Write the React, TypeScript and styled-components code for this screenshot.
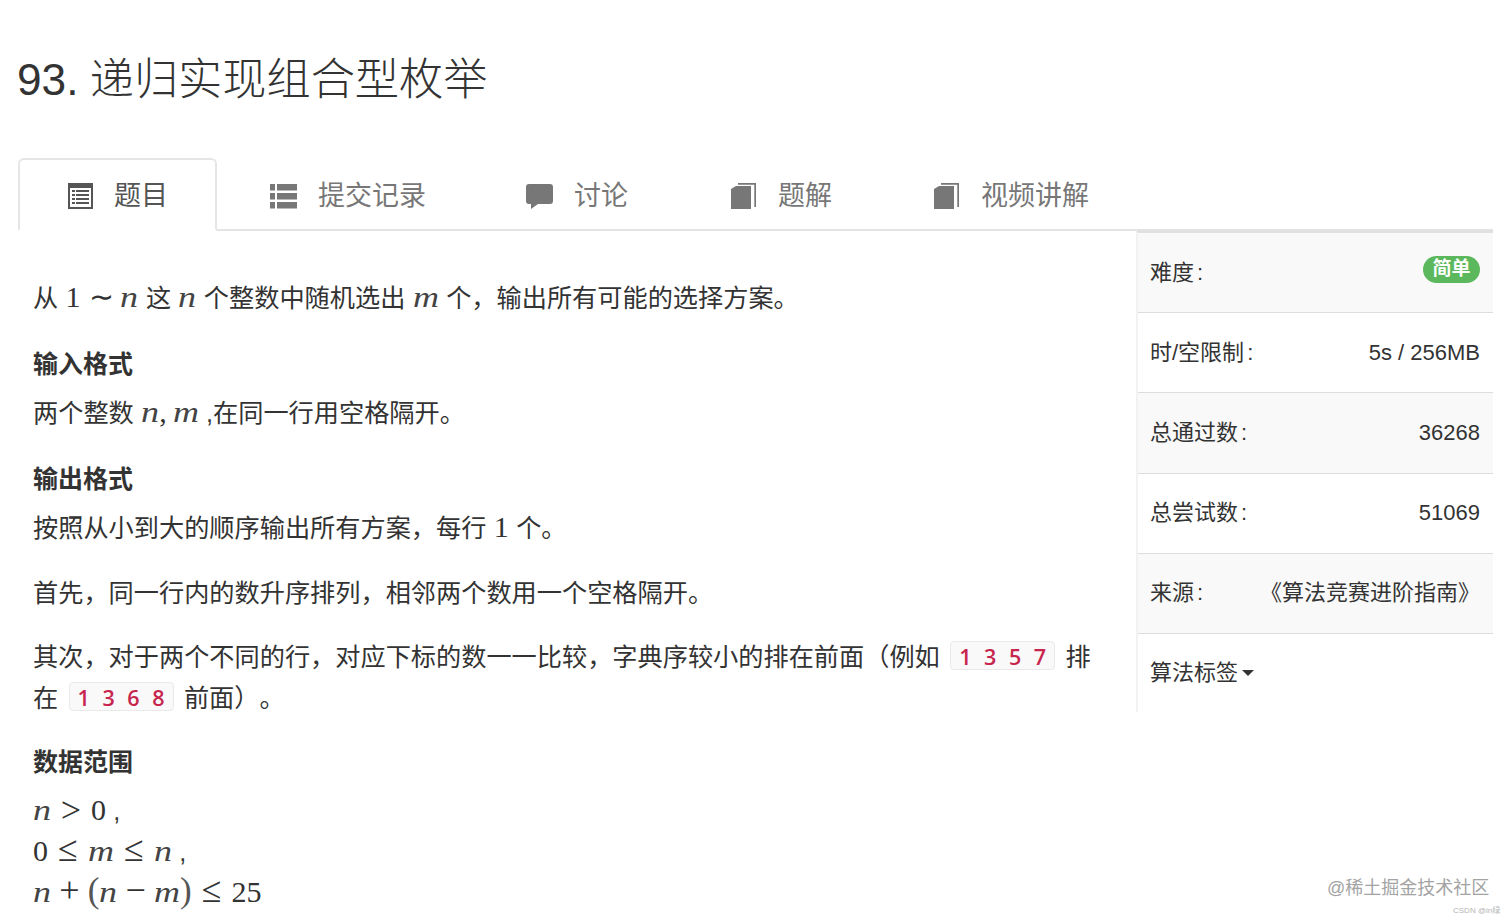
import React from "react";
import styled, { createGlobalStyle } from "styled-components";

const Global = createGlobalStyle`
  html, body { margin: 0; padding: 0; background: #fff; }
  body {
    height: 923px;
    overflow: hidden;
    color: #333;
    font-family: "Liberation Sans", "Noto Sans CJK SC", sans-serif;
    text-spacing-trim: space-all;
  }
`;

const Page = styled.div`
  position: relative;
  width: 1512px;
  height: 923px;
  padding: 52px 19px 0 17px;
  box-sizing: border-box;
  overflow: hidden;
`;

const Title = styled.h1`
  margin: 0 0 50px;
  font-size: 44.2px;
  line-height: 56px;
  font-weight: 300;
  word-spacing: -1px;
  color: #333;
`;

const Tabs = styled.ul`
  display: flex;
  margin: 0 0 0 1px;
  padding: 0;
  list-style: none;
  height: 73px;
  box-sizing: border-box;
  border-bottom: 2px solid #e4e4e4;
`;

const Tab = styled.li<{ $ml?: number }>`
  display: flex;
  align-items: center;
  gap: 21px;
  height: 73px;
  box-sizing: border-box;
  padding: 0 49px 3px 50px;
  margin-left: ${(p) => p.$ml ?? 0}px;
  font-size: 27px;
  color: #777;
`;

const ActiveTab = styled(Tab)`
  gap: 20px;
  padding: 0 47px 3px 47px;
  color: #555;
  background: #fff;
  border: 2px solid #e6e6e6;
  border-bottom-color: #fff;
  border-radius: 6px 6px 0 0;
`;

const TabIcon = styled.svg`
  flex: none;
  width: 27px;
  height: 28px;
  margin-top: 6px;
  fill: currentColor;
`;

const Body = styled.div`
  display: flex;
  align-items: flex-start;
`;

const Main = styled.main`
  flex: 1;
  min-width: 0;
  padding: 47px 30px 0 16px;
  font-size: 25.2px;
  line-height: 41px;
  word-spacing: 0.4px;
  color: #333;
`;

const Para = styled.p`
  margin: 0 0 24px;
`;

const ChipPara = styled(Para)`
  margin: -1px 0 22px;
`;

const Heading = styled.h4`
  margin: 0 0 7px;
  font-size: 25px;
  line-height: 43px;
  font-weight: 700;
`;

const MVar = styled.i<{ $w?: number }>`
  display: inline-block;
  width: ${(p) => p.$w ?? 18}px;
  font-family: "Liberation Serif", serif;
  font-size: 30px;
  line-height: 0;
  font-style: italic;
  color: #444;
  transform: scaleX(1.2);
  transform-origin: left;
`;

const MNum = styled.span`
  font-family: "Liberation Serif", serif;
  font-size: 30px;
  line-height: 0;
`;

const MParen = styled.span`
  font-family: "Liberation Serif", serif;
  font-size: 35px;
  line-height: 0;
  color: #555;
`;

const MComma = styled.span`
  font-family: "Liberation Serif", serif;
  font-size: 30px;
  line-height: 0;
  margin-right: 6px;
`;

const MOp = styled.span<{ $gap?: number; $size?: number; $drop?: number }>`
  display: inline-block;
  width: 23.3px;
  margin: 0 ${(p) => p.$gap ?? 8.3}px;
  text-align: center;
  font-family: "Liberation Serif", serif;
  font-size: ${(p) => p.$size ?? 36}px;
  line-height: 0;
  vertical-align: ${(p) => -(p.$drop ?? 0)}px;
`;

const Chip = styled.code`
  display: inline-block;
  height: 29px;
  box-sizing: border-box;
  line-height: 29px;
  padding: 0 8px;
  vertical-align: 1px;
  margin: 0 3px;
  font-family: "Open Sans", sans-serif;
  font-size: 21.5px;
  font-weight: 600;
  word-spacing: 7px;
  color: #c7254e;
  background: #f9f9f9;
  border: 1px solid #e9e9e9;
  border-radius: 4px;
  white-space: pre;
`;

const Side = styled.aside`
  flex: none;
  width: 357px;
  box-sizing: border-box;
  border-left: 2px solid #f2f2f2;
  border-top: 3px solid #e0e0e0;
  margin-top: -1px;
  font-size: 22px;
  line-height: 30px;
  color: #333;
`;

const SideRow = styled.div<{ $alt?: boolean; $last?: boolean }>`
  display: flex;
  align-items: center;
  justify-content: space-between;
  height: ${(p) => (p.$last ? 78 : 80.2)}px;
  box-sizing: border-box;
  padding: 0 13px 0 12px;
  background: ${(p) => (p.$alt ? "#f9f9f9" : "#fff")};
  border-bottom: ${(p) => (p.$last ? "0" : "1px solid #ddd")};
`;

const Colon = styled.span`
  margin-left: 3px;
`;

const Badge = styled.span`
  display: inline-block;
  width: 57px;
  height: 27px;
  line-height: 26px;
  margin-top: -6px;
  text-align: center;
  border-radius: 14px;
  background: #5cb85c;
  color: #fff;
  font-size: 19px;
  font-weight: 700;
`;

const TagToggle = styled.span`
  display: inline-flex;
  align-items: center;
  gap: 4px;
`;

const Caret = styled.span`
  display: inline-block;
  width: 0;
  height: 0;
  border-left: 6px solid transparent;
  border-right: 6px solid transparent;
  border-top: 6px solid #333;
`;

const Watermark = styled.div`
  position: absolute;
  left: 1327px;
  top: 877px;
  font-size: 18px;
  line-height: 22px;
  color: #a3a3a3;
  white-space: nowrap;
`;

const Credit = styled.div`
  position: absolute;
  left: 1453px;
  top: 905px;
  font-size: 8px;
  line-height: 12px;
  color: #b5b5b5;
  white-space: nowrap;
`;

const ListAlt = () => (
  <TabIcon viewBox="0 0 27 28">
    <path fillRule="evenodd" d="M1 1h25v26H1z M3 6v19h21V6z" />
    <path d="M5 8h3v2H5zM9 8h13v2H9zM5 12h3v2H5zM9 12h13v2H9zM5 16h3v2H5zM9 16h13v2H9zM5 20h3v2H5zM9 20h13v2H9z" />
  </TabIcon>
);

const ThList = () => (
  <TabIcon viewBox="0 0 27 28">
    <path d="M0 2h5v6.5H0zM7 2h20v6.5H7zM0 11h5v6.5H0zM7 11h20v6.5H7zM0 20h5v6.5H0zM7 20h20v6.5H7z" />
  </TabIcon>
);

const Comment = () => (
  <TabIcon viewBox="0 0 27 28">
    <path d="M3 2h21a3 3 0 0 1 3 3v14a3 3 0 0 1-3 3H12l-7 5v-5H3a3 3 0 0 1-3-3V5a3 3 0 0 1 3-3z" />
  </TabIcon>
);

const Book = () => (
  <TabIcon viewBox="0 0 27 28">
    <path d="M6 4h15v23H1V7z" />
    <path d="M8 1h18v24h-1.7V2.7H8z" />
  </TabIcon>
);

export default function App() {
  return (
    <Page>
      <Global />
      <Title>93. 递归实现组合型枚举</Title>
      <Tabs>
        <ActiveTab><ListAlt />题目</ActiveTab>
        <Tab $ml={3}><ThList />提交记录</Tab>
        <Tab $ml={1}><Comment />讨论</Tab>
        <Tab $ml={3}><Book />题解</Tab>
        <Tab $ml={2}><Book />视频讲解</Tab>
      </Tabs>
      <Body>
        <Main>
          <Para>
            从 <MNum>1</MNum><MOp $size={30}>∼</MOp><MVar>n</MVar> 这 <MVar>n</MVar> 个整数中随机选出 <MVar $w={26}>m</MVar> 个，输出所有可能的选择方案。
          </Para>
          <Heading>输入格式</Heading>
          <Para>
            两个整数 <MVar>n</MVar><MComma>,</MComma><MVar $w={26}>m</MVar> ,在同一行用空格隔开。
          </Para>
          <Heading>输出格式</Heading>
          <Para>按照从小到大的顺序输出所有方案，每行 <MNum>1</MNum> 个。</Para>
          <Para>首先，同一行内的数升序排列，相邻两个数用一个空格隔开。</Para>
          <ChipPara>
            其次，对于两个不同的行，对应下标的数一一比较，字典序较小的排在前面（例如 <Chip>1 3 5 7</Chip> 排在 <Chip>1 3 6 8</Chip> 前面）。
          </ChipPara>
          <Heading>数据范围</Heading>
          <Para>
            <MVar>n</MVar><MOp $drop={2}>&gt;</MOp><MNum>0</MNum> ,<br />
            <MNum>0</MNum><MOp>≤</MOp><MVar $w={26}>m</MVar><MOp>≤</MOp><MVar>n</MVar> ,<br />
            <MVar>n</MVar><MOp $gap={6.7}>+</MOp><MParen>(</MParen><MVar>n</MVar><MOp $gap={6.7}>−</MOp><MVar $w={26}>m</MVar><MParen>)</MParen><MOp>≤</MOp><MNum>25</MNum>
          </Para>
        </Main>
        <Side>
          <SideRow $alt><span>难度<Colon>:</Colon></span><Badge>简单</Badge></SideRow>
          <SideRow><span>时/空限制<Colon>:</Colon></span><span>5s / 256MB</span></SideRow>
          <SideRow $alt><span>总通过数<Colon>:</Colon></span><span>36268</span></SideRow>
          <SideRow><span>总尝试数<Colon>:</Colon></span><span>51069</span></SideRow>
          <SideRow $alt><span>来源<Colon>:</Colon></span><span>《算法竞赛进阶指南》</span></SideRow>
          <SideRow $last><TagToggle>算法标签<Caret /></TagToggle></SideRow>
        </Side>
      </Body>
      <Watermark>@稀土掘金技术社区</Watermark>
      <Credit>CSDN @in绿</Credit>
    </Page>
  );
}
